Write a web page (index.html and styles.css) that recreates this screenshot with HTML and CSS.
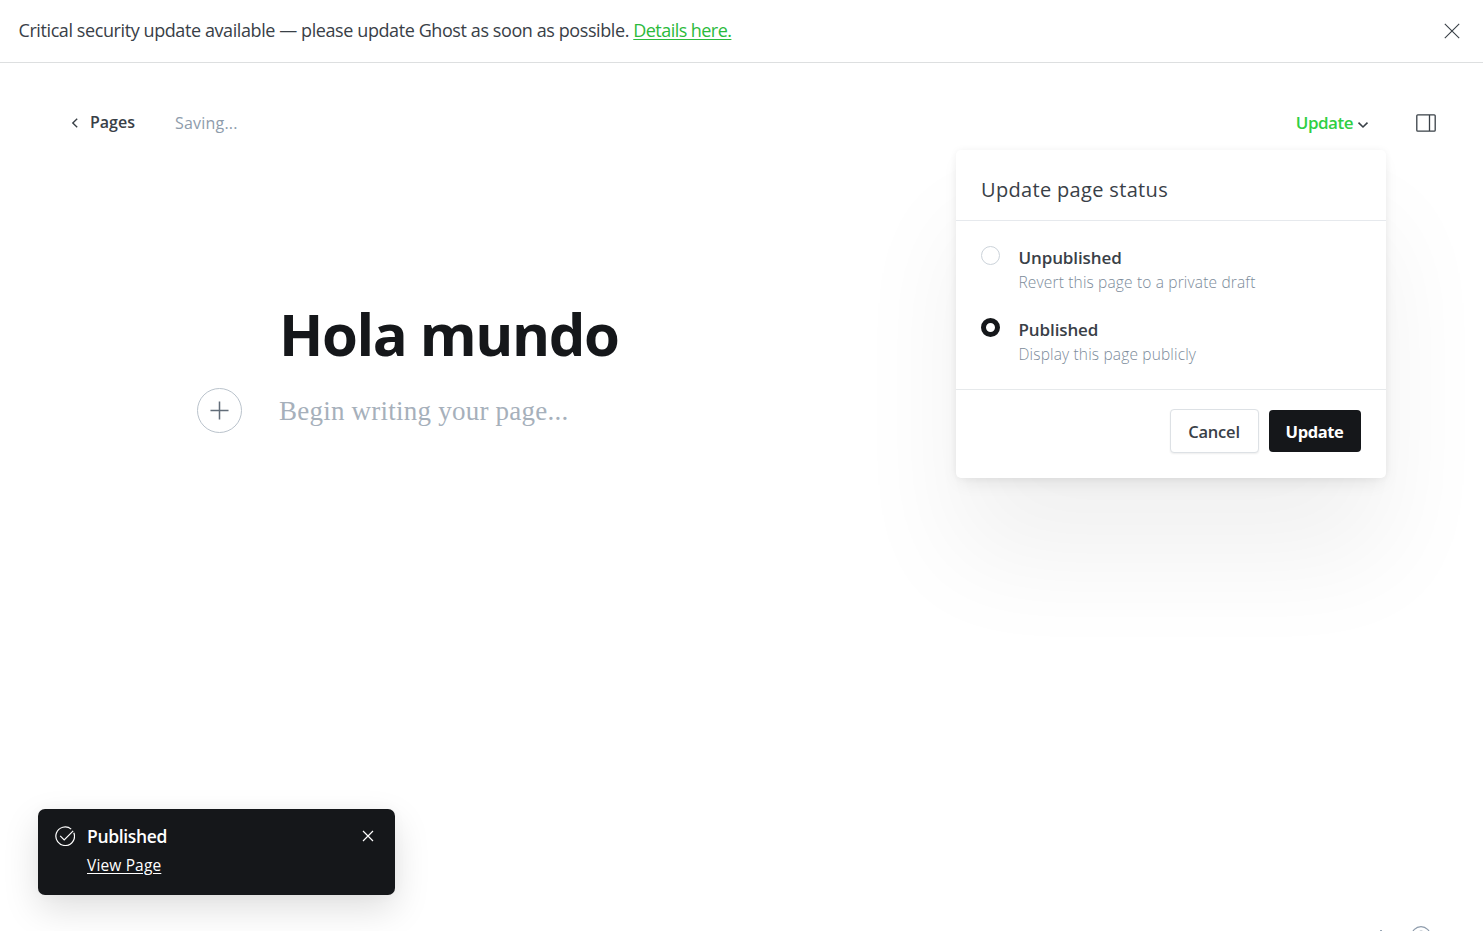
FILE: index.html
```html
<!DOCTYPE html>
<html lang="en">
<head>
<meta charset="utf-8">
<title>Ghost editor</title>
<link rel="stylesheet" href="styles.css">
</head>
<body>
<div class="app">
  <div class="alert">
    <p class="alert-text">Critical security update available — please update Ghost as soon as possible. <a class="alert-link">Details here.</a></p>
    <svg class="alert-close" viewBox="0 0 16 16"><path d="M.8.8l14.4 14.4M15.2.8L.8 15.2"/></svg>
  </div>
  <header class="bar">
    <svg class="back-icon" viewBox="0 0 7 10"><path d="M6.200.8L1.800 5l4.400 4.200"/></svg>
    <a class="back">Pages</a>
    <span class="saving">Saving...</span>
    <div class="publish">
      <span class="publish-label">Update</span>
      <svg class="chevron" viewBox="0 0 12 8"><path d="M1.5 1.7L6 6l4.500-4.300"/></svg>
      <section class="menu">
        <h2 class="menu-head">Update page status</h2>
        <div class="menu-body">
          <div class="option">
            <i class="radio"></i>
            <div><div class="option-name">Unpublished</div><div class="option-desc">Revert this page to a private draft</div></div>
          </div>
          <div class="option">
            <i class="radio radio-on"></i>
            <div><div class="option-name">Published</div><div class="option-desc">Display this page publicly</div></div>
          </div>
        </div>
        <footer class="menu-foot">
          <button class="btn cancel">Cancel</button>
          <button class="btn update">Update</button>
        </footer>
      </section>
    </div>
    <svg class="sidebar-icon" viewBox="0 0 20 18"><rect x=".8" y=".8" width="18.400" height="16.400" rx="1"/><path d="M13.500 1v16"/></svg>
  </header>
  <main class="editor">
    <h1 class="title">Hola mundo</h1>
    <div class="row">
      <div class="plus"><svg viewBox="0 0 20 20"><path d="M10 .5v19M.5 10h19"/></svg></div>
      <p class="placeholder">Begin writing your page...</p>
    </div>
  </main>
  <aside class="toast">
    <svg class="check" viewBox="0 0 20 20"><path d="M18.800 6.700A9.300 9.300 0 1 1 16.200 3.100"/><path d="M5.200 9.800l4 4 9-9"/></svg>
    <div class="toast-text"><div class="toast-title">Published</div><a class="toast-link">View Page</a></div>
    <svg class="toast-close" viewBox="0 0 12 12"><path d="M1 1l10 10M11 1L1 11"/></svg>
  </aside>
  <div class="status"><i class="status-dot"></i><svg class="help" viewBox="0 0 20 20"><circle cx="10" cy="10" r="9.300"/><path d="M7.500 7.500C7.500 4.300 12.500 4.300 12.500 7.500 12.500 9.500 10 9.500 10 12"/></svg></div>
</div>
</body>
</html>
```
FILE: styles.css
```css
* { box-sizing: border-box; }
body { margin: 0; background: #fff; color: #394047; font-family: "Open Sans", "Noto Sans", sans-serif; }
h1, h2, p { margin: 0; font-weight: 400; }
svg { display: block; flex: none; fill: none; stroke: currentColor; }
.app { position: relative; height: 931px; overflow: hidden; white-space: nowrap; }

.alert { height: 63px; border-bottom: 1px solid #dddfe0; display: flex; align-items: center; justify-content: space-between; padding: 0 23.500px 1px 18.500px; }
.alert-text { padding-bottom: 1px; font-size: 18px; line-height: 26px; letter-spacing: -.41px; }
.alert-link { color: #2bba3c; letter-spacing: -.55px; text-decoration: underline; text-underline-offset: 2px; }
.alert-close { width: 16px; height: 16px; stroke-width: 1.1; }

.bar { height: 120px; display: flex; align-items: center; padding: 0 47px 0 71px; }
.back-icon { width: 7px; height: 10px; stroke-width: 1.4; }
.back { margin-left: 12px; width: 85px; padding-bottom: 2px; font-size: 16px; font-weight: 600; line-height: 24px; }
.saving { font-size: 16px; line-height: 24px; letter-spacing: .2px; padding-bottom: 1px; color: #8e9cac; }
.publish { position: relative; margin-left: auto; display: flex; align-items: center; gap: 4px; margin-right: 47px; }
.publish-label { color: #30cf43; font-size: 17px; font-weight: 600; line-height: 24px; letter-spacing: -.5px; }
.chevron { width: 12px; height: 8px; margin-top: 4px; stroke-width: 1.6; }
.sidebar-icon { width: 20px; height: 18px; stroke-width: 1.3; }

.menu { position: absolute; top: 39px; right: -17px; width: 430px; height: 328px; background: #fff; border-radius: 5px; box-shadow: 0 0 7px rgba(0,0,0,.05), 0 8px 18px -4px rgba(0,0,0,.08), 0 80px 110px rgba(0,0,0,.06); z-index: 2; }
.menu-head { height: 71px; padding: 25px 25px 0; border-bottom: 1px solid #e6e9ed; font-size: 20px; line-height: 30px; letter-spacing: .33px; }
.menu-body { height: 169px; padding: 23px 25px 0; border-bottom: 1px solid #e6e9eb; }
.option { display: flex; gap: 18.500px; height: 71.500px; }
.radio { width: 19px; height: 19px; margin-top: 2px; border: 1px solid #ccd3da; border-radius: 50%; }
.radio-on { border: 5px solid #15171a; }
.option-name { padding-top: 1px; font-size: 17px; line-height: 26px; font-weight: 600; letter-spacing: -.11px; }
.option-desc { margin-top: -1px; font-size: 15.500px; line-height: 24px; font-weight: 300; letter-spacing: .16px; color: #7c8b9a; }
.menu-foot { display: flex; justify-content: flex-end; align-items: center; gap: 10px; padding: 19px 25px 0; }
.btn { height: 42px; border: 0; border-radius: 4px; padding: 1px 1px 0 0; font: 600 16.500px/24px "Open Sans", sans-serif; letter-spacing: -.2px; }
.cancel { width: 89px; height: 44px; border: 1px solid #dde1e5; background: #fff; color: #394047; box-shadow: 0 1px 2px rgba(0,0,0,.07); }
.update { width: 92px; background: #15171a; color: #fff; font-weight: 700; letter-spacing: -.4px; }

.editor { padding: 115px 0 0 197px; }
.title { padding-left: 82px; font-size: 58px; line-height: 72px; font-weight: 700; color: #15171a; letter-spacing: -1.450px; }
.row { display: flex; align-items: center; gap: 37px; margin-top: 18px; }
.plus { width: 45px; height: 45px; border: 1px solid #bac3cc; border-radius: 50%; display: grid; place-items: center; color: #626d79; }
.plus svg { width: 19px; height: 19px; stroke-width: 1.6; }
.placeholder { padding-top: 1px; font: 27px/38px "Liberation Serif", serif; color: #a6b0bb; letter-spacing: .23px; }

.toast { position: absolute; left: 38px; top: 809px; width: 357px; height: 86px; display: flex; padding: 14px 21px 0 17px; border-radius: 7px; background: #15171a; color: #fff; box-shadow: 0 0 14px rgba(0,0,0,.03), 0 14px 36px rgba(0,0,0,.13); }
.check { width: 20px; height: 20px; margin: 3px 12px 0 0; stroke-width: 1.2; }
.toast-title { font-size: 17.500px; font-weight: 650; line-height: 26px; letter-spacing: -.35px; }
.toast-link { display: block; font-size: 15.500px; font-weight: 500; line-height: 24px; margin-top: 4px; letter-spacing: .15px; text-decoration: underline; text-underline-offset: 2px; }
.toast-close { width: 12px; height: 12px; margin: 7px 0 0 auto; stroke-width: 1.2; }

.status { position: absolute; left: 1380px; top: 926px; display: flex; color: #8e9cac; }
.status-dot { width: 2px; height: 1px; margin: 4px 29px 0 0; background: #9ba8b7; }
.help { width: 20px; height: 20px; stroke-width: 1.2; }
```
